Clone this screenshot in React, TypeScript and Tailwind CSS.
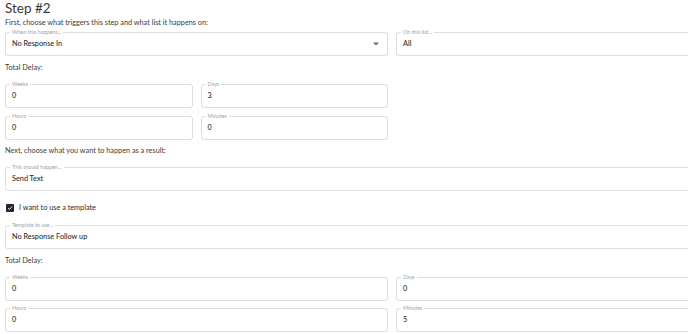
import React from "react";

const font = { fontFamily: "Lato, 'Open Sans', sans-serif" };

type FieldProps = { label: string; value: string; select?: boolean };

const Field: React.FC<FieldProps> = ({ label, value, select }) => (
  <div className="relative flex h-[24px] items-center rounded-[3px] border border-[#dedede] px-[6px]">
    <span className="absolute -top-[4px] left-[4px] bg-white px-[2px] text-[5.4px] leading-[6px] text-[#a0a4ab]">
      {label}
    </span>
    <span className="flex-1 text-[7.3px] font-medium text-[#2e2e2e]">{value}</span>
    {select && (
      <svg width="6" height="4" viewBox="0 0 6 4" className="mr-[2px]">
        <path d="M0 0.5 L6 0.5 L3 3.5 Z" fill="#6b6b6b" />
      </svg>
    )}
  </div>
);

const Label: React.FC<{ text: string; h: string }> = ({ text, h }) => (
  <div className={`flex items-center text-[7.3px] text-[#3c3c3c] ${h}`}>{text}</div>
);

export default function App() {
  return (
    <div className="h-[334px] w-full overflow-hidden bg-white" style={font}>
      <div className="flex w-[784px] flex-col px-[5px]">
        <div className="flex h-[16px] items-center text-[13.5px] text-[#3a3a3a]">Step #2</div>
        <Label text="First, choose what triggers this step and what list it happens on:" h="h-[14px]" />

        <div className="mt-[2px] grid grid-cols-2 gap-[8px]">
          <Field label="When this happens..." value="No Response In" select />
          <Field label="On this list..." value="All" />
        </div>

        <Label text="Total Delay:" h="h-[24px]" />
        <div className="grid grid-cols-2 gap-[8px]">
          <div className="mt-[4px] grid grid-cols-2 gap-x-[8px] gap-y-[8px]">
            <Field label="Weeks" value="0" />
            <Field label="Days" value="3" />
            <Field label="Hours" value="0" />
            <Field label="Minutes" value="0" />
          </div>
        </div>

        <Label text="Next, choose what you want to happen as a result:" h="h-[22px]" />
        <div className="mt-[5px]">
          <Field label="This should happen..." value="Send Text" />
        </div>

        <div className="flex h-[34px] items-center gap-[5px]">
          <span className="ml-[1px] flex h-[8px] w-[8px] items-center justify-center rounded-[1px] bg-[#1e2533]">
            <svg width="6" height="6" viewBox="0 0 24 24">
              <path d="M4 12.5 L10 18 L20 6" fill="none" stroke="#ffffff" strokeWidth="3.6" />
            </svg>
          </span>
          <span className="text-[7.3px] text-[#2b2b2b]">I want to use a template</span>
        </div>

        <Field label="Template to use..." value="No Response Follow up" />

        <Label text="Total Delay:" h="h-[24px]" />
        <div className="mt-[4px] grid grid-cols-2 gap-x-[8px] gap-y-[7px]">
          <Field label="Weeks" value="0" />
          <Field label="Days" value="0" />
          <Field label="Hours" value="0" />
          <Field label="Minutes" value="5" />
        </div>
      </div>
    </div>
  );
}
